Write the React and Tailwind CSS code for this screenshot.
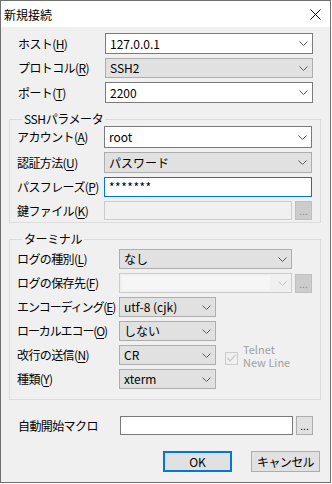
import React from "react";

const Chevron = ({ disabled }) => (
  <svg width="9" height="5" viewBox="0 0 9 5" className="shrink-0">
    <path d="M0.5 0.5 L4.5 4.5 L8.5 0.5" fill="none" stroke={disabled ? "#c4c4c4" : "#5a5a5a"} strokeWidth="1" />
  </svg>
);

const M = ({ c }) => <span className="underline underline-offset-2">{c}</span>;

function Label({ w, tight, children }) {
  return (
    <div className={`${w} shrink-0 whitespace-nowrap ${tight ? "tracking-[-1.1px]" : "tracking-[-0.6px]"}`}>{children}</div>
  );
}

function EditCombo({ text, w, h }) {
  return (
    <div className={`flex items-center justify-between bg-white border border-[#7a7a7a] pl-[4px] pr-[4px] shrink-0 ${w} ${h}`}>
      <span className="whitespace-nowrap">{text}</span>
      <Chevron />
    </div>
  );
}

function ListCombo({ text, w, h }) {
  return (
    <div className={`flex items-center justify-between bg-[#e1e1e1] border border-[#adadad] pl-[4px] pr-[4px] shrink-0 ${w} ${h}`}>
      <span className="whitespace-nowrap">{text}</span>
      <Chevron />
    </div>
  );
}

function DotsButton({ disabled }) {
  return (
    <div
      className={`ml-[3px] w-[17px] h-[19px] shrink-0 flex items-end justify-center pb-[3px] text-[10px] leading-[10px] border ${
        disabled ? "bg-[#cccccc] border-[#bfbfbf] text-[#8a8a8a]" : "bg-[#e1e1e1] border-[#adadad] text-black"
      }`}
    >
      ...
    </div>
  );
}

export default function App() {
  return (
    <div className="w-[332px] h-[484px] bg-white overflow-hidden">
      <div className="w-[331px] h-[483px] border border-[#707070] bg-[#f0f0f0] flex flex-col text-[12px] leading-[14px] text-black font-['Yu_Gothic_UI','Noto_Sans_CJK_JP',sans-serif]">
        {/* title bar */}
        <div className="h-[26px] bg-white flex items-center justify-between pl-[3px] pr-[9px] shrink-0">
          <span className="text-[12px] leading-[14px] mt-[1px]">新規接続</span>
          <svg width="11" height="11" viewBox="0 0 11 11">
            <path d="M0.5 0.5 L10.5 10.5 M10.5 0.5 L0.5 10.5" stroke="#111" strokeWidth="1" />
          </svg>
        </div>

        {/* top section */}
        <div className="pl-[17px]">
          <div className="flex items-center mt-[6px]">
            <Label w="w-[87px]">ホスト(<M c="H" />)</Label>
            <EditCombo text="127.0.0.1" w="w-[208px]" h="h-[21px]" />
          </div>
          <div className="flex items-center mt-[4px]">
            <Label w="w-[87px]">プロトコル(<M c="R" />)</Label>
            <ListCombo text="SSH2" w="w-[208px]" h="h-[20px]" />
          </div>
          <div className="flex items-center mt-[4px]">
            <Label w="w-[87px]">ポート(<M c="T" />)</Label>
            <EditCombo text="2200" w="w-[208px]" h="h-[21px]" />
          </div>
        </div>

        {/* SSH group */}
        <fieldset className="mt-[9px] ml-[8px] w-[312px] border border-[#dcdcdc] pl-[7px] pb-[2px] shrink-0">
          <legend className="ml-[5px] px-[2px] leading-[14px] tracking-[-0.4px]">SSHパラメータ</legend>
          <div className="flex items-center">
            <Label w="w-[87px]">アカウント(<M c="A" />)</Label>
            <EditCombo text="root" w="w-[208px]" h="h-[22px]" />
          </div>
          <div className="flex items-center mt-[4px]">
            <Label w="w-[87px]">認証方法(<M c="U" />)</Label>
            <ListCombo text="パスワード" w="w-[208px]" h="h-[21px]" />
          </div>
          <div className="flex items-center mt-[4px]">
            <Label w="w-[87px]">パスフレーズ(<M c="P" />)</Label>
            <div className="w-[208px] h-[20px] shrink-0 bg-white border border-[#0078d7] pl-[4px] flex items-center tracking-[0.5px]">*******</div>
          </div>
          <div className="flex items-center mt-[4px]">
            <Label w="w-[87px]">鍵ファイル(<M c="K" />)</Label>
            <div className="w-[188px] h-[19px] shrink-0 bg-[#f0f0f0] border border-[#cccccc]" />
            <DotsButton disabled />
          </div>
        </fieldset>

        {/* Terminal group */}
        <fieldset className="mt-[9px] ml-[8px] w-[312px] border border-[#dcdcdc] pl-[7px] pb-[10px] shrink-0">
          <legend className="ml-[5px] px-[2px] leading-[14px] tracking-[-0.4px]">ターミナル</legend>
          <div className="flex items-center mt-[3px]">
            <Label w="w-[102px]">ログの種別(<M c="L" />)</Label>
            <ListCombo text="なし" w="w-[173px]" h="h-[20px]" />
          </div>
          <div className="flex items-center mt-[4px]">
            <Label w="w-[102px]">ログの保存先(<M c="F" />)</Label>
            <div className="w-[173px] h-[20px] shrink-0 bg-[#f0f0f0] border border-[#cccccc] flex items-center justify-between pl-[2px] pr-[4px]">
              <div className="w-[148px] h-[14px] bg-[#f6f6f6]" />
              <Chevron disabled />
            </div>
            <DotsButton disabled />
          </div>
          <div className="flex items-center mt-[4px]">
            <Label w="w-[102px]" tight>エンコーディング(<M c="E" />)</Label>
            <ListCombo text="utf-8 (cjk)" w="w-[97px]" h="h-[20px]" />
          </div>
          <div className="flex items-center mt-[4px]">
            <Label w="w-[102px]" tight>ローカルエコー(<M c="O" />)</Label>
            <ListCombo text="しない" w="w-[97px]" h="h-[20px]" />
          </div>
          <div className="flex items-center mt-[4px] h-[20px]">
            <Label w="w-[102px]">改行の送信(<M c="N" />)</Label>
            <ListCombo text="CR" w="w-[97px]" h="h-[20px]" />
            <div className="ml-[9px] w-[13px] h-[13px] shrink-0 border border-[#cccccc] bg-[#f0f0f0] mt-[6px] flex items-center justify-center">
              <svg width="9" height="8" viewBox="0 0 9 8">
                <path d="M0.5 4 L3.2 6.8 L8.5 0.8" fill="none" stroke="#c4c4c4" strokeWidth="1.2" />
              </svg>
            </div>
            <div className="ml-[5px] text-[#a0a0a0] text-[11px] leading-[13px] mt-[1px] whitespace-nowrap flex flex-col">
              <span className="block h-[13px]">Telnet</span>
              <span className="block h-[13px]">New Line</span>
            </div>
          </div>
          <div className="flex items-center mt-[4px]">
            <Label w="w-[102px]">種類(<M c="Y" />)</Label>
            <ListCombo text="xterm" w="w-[97px]" h="h-[20px]" />
          </div>
        </fieldset>

        {/* macro */}
        <div className="flex items-center mt-[16px] pl-[17px]">
          <Label w="w-[102px]">自動開始マクロ</Label>
          <div className="w-[173px] h-[19px] shrink-0 bg-white border border-[#7a7a7a]" />
          <DotsButton />
        </div>

        {/* buttons */}
        <div className="flex mt-[16px] pl-[162px]">
          <div className="w-[69px] h-[21px] bg-[#e1e1e1] border-2 border-[#0078d7] flex items-center justify-center">OK</div>
          <div className="ml-[19px] w-[69px] h-[21px] bg-[#e1e1e1] border border-[#adadad] flex items-center justify-center tracking-[-0.6px]">キャンセル</div>
        </div>
      </div>
    </div>
  );
}
